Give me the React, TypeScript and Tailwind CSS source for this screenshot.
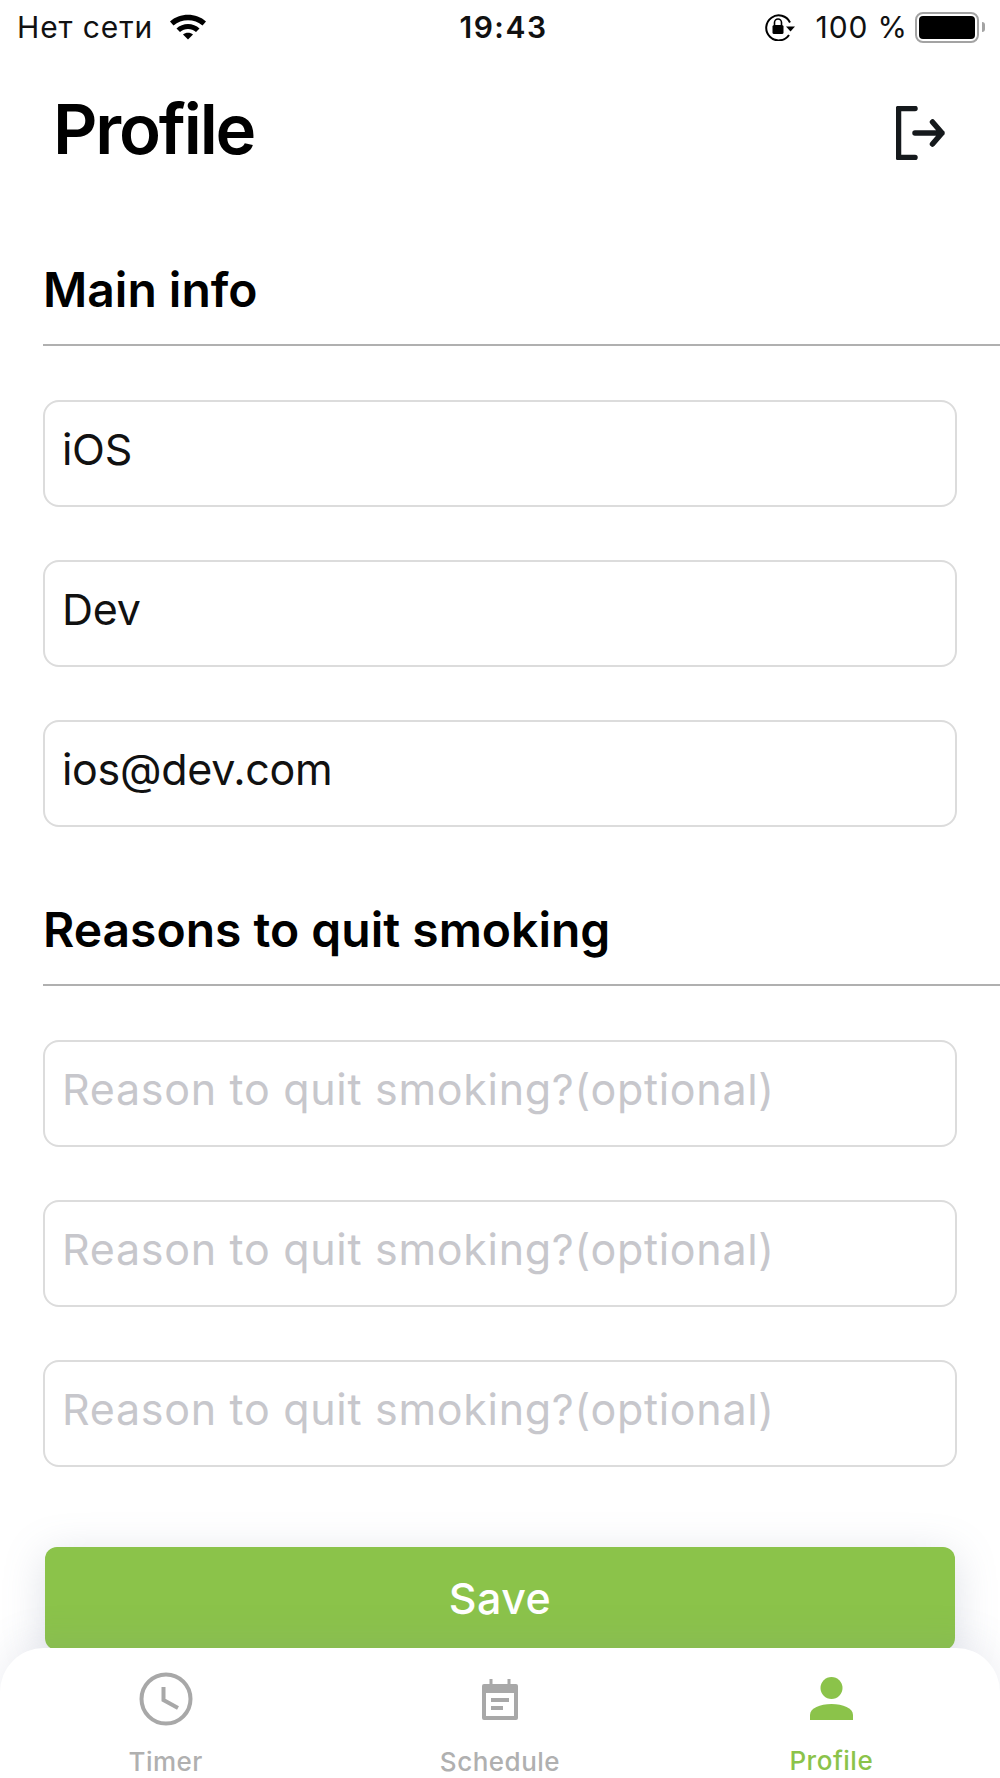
import React from 'react';

const font = 'font-["Inter",sans-serif]';

const fields = ['iOS', 'Dev', 'ios@dev.com'];
const reasons = [1, 2, 3];

const StatusBar = () => (
  <div className='flex h-[54px] items-center justify-between pl-[17px] pr-[15px] font-["Inter",sans-serif] text-[30px] tracking-[0.9px] text-[#111]'>
    <div className="flex w-[300px] items-center gap-[16px]">
      <span>Нет сети</span>
      <svg width="38" height="28" viewBox="0 0 38 28" fill="none" className="mb-[2px]">
        <path d="M1 9.500C10.500 0.500 27.500 0.500 37 9.500L33.500 13.500C25.500 6.500 12.500 6.500 4.500 13.500Z" fill="#000" />
        <path d="M7.500 16.500C13.500 10.500 24.500 10.500 30.500 16.500L27 20C22.500 16 15.500 16 11 20Z" fill="#000" />
        <path d="M14 22.500C16.500 20 21.500 20 24 22.500L19 27.500Z" fill="#000" />
      </svg>
    </div>
    <span className="ml-[5px] font-semibold tracking-[1.5px]">19:43</span>
    <div className="flex w-[300px] items-center justify-end">
      <svg width="32" height="28" viewBox="0 0 32 28" fill="none" className="mr-[20px]">
        <path d="M26 9.500A12.500 12.500 0 1 0 25 22" stroke="#000" strokeWidth="2" />
        <path d="M22 13.500H31L26.500 18.500Z" fill="#000" />
        <rect x="8.500" y="12" width="11" height="9" rx="1.500" fill="#000" />
        <path d="M10.500 12V9.500A3.500 3.500 0 0 1 17.500 9.500V12" stroke="#000" strokeWidth="1.600" />
      </svg>
      <span className="mr-[7px]">100 %</span>
      <div className="flex items-center">
        <div className="flex h-[31px] w-[64px] rounded-[8px] border-2 border-[#a3a3a3] p-[2px]">
          <div className="flex-1 rounded-[4px] bg-black" />
        </div>
        <div className="ml-[3px] h-[10px] w-[3px] rounded-r-full bg-[#a3a3a3]" />
      </div>
    </div>
  </div>
);

const SectionTitle = ({ children }: { children: React.ReactNode }) => (
  <div className="ml-[43px] border-b-2 border-[#b0b0b0] pb-[24px]">
    <h2 className="text-[48px] font-semibold leading-[60px] text-black">{children}</h2>
  </div>
);

const Field = ({ value, placeholder }: { value?: string; placeholder?: string }) => (
  <div className="flex h-[107px] items-center rounded-[16px] border-2 border-[#dcdcdc] bg-white px-[17px] pb-[8px]">
    <span className={`text-[43px] ${value ? 'tracking-[-0.3px] text-[#111]' : 'tracking-[0.7px] text-[#c7c7cc]'}`}>{value || placeholder}</span>
  </div>
);

const TabBar = () => (
  <div className="absolute bottom-0 left-0 right-0 flex h-[130px] rounded-t-[44px] bg-white font-['Inter',sans-serif] text-[26px] font-medium tracking-[0.5px] shadow-[0_-6px_40px_rgba(120,130,160,0.14)]">
    <div className="flex flex-1 flex-col items-center pr-[3px] text-[#b0b0b0]">
      <svg width="54" height="54" viewBox="0 0 54 54" fill="none" className="mt-[24px]">
        <circle cx="27" cy="27" r="24.500" stroke="#a8a8a8" strokeWidth="4" />
        <path d="M24.500 15V28L39 36" stroke="#a8a8a8" strokeWidth="4" />
      </svg>
      <span className="mt-[23px] leading-none">Timer</span>
    </div>
    <div className="flex flex-1 flex-col items-center text-[#b0b0b0]">
      <svg width="36" height="41" viewBox="0 0 36 41" fill="none" className="mt-[31px]">
        <path d="M2 7H34V39H2Z" stroke="#a8a8a8" strokeWidth="4" strokeLinejoin="round" />
        <path d="M2 5H34V14H2Z" fill="#a8a8a8" />
        <path d="M9 0V6M27 0V6" stroke="#a8a8a8" strokeWidth="3" />
        <path d="M9 21H27M9 29H21" stroke="#a8a8a8" strokeWidth="4" />
      </svg>
      <span className="mt-[29px] leading-none">Schedule</span>
    </div>
    <div className="flex flex-1 flex-col items-center pr-[3px] text-[#8bc34a]">
      <svg width="43" height="43" viewBox="0 0 43 43" className="mt-[29px]" fill="#8bc34a">
        <circle cx="21.500" cy="11" r="11" />
        <path d="M0 43V38C0 31 10 27 21.500 27C33 27 43 31 43 38V43Z" />
      </svg>
      <span className="mt-[28px] leading-none">Profile</span>
    </div>
  </div>
);

export default function App() {
  return (
    <div className={`relative h-[1778px] w-[1000px] overflow-hidden bg-white ${font}`}>
      <StatusBar />
      <div className="flex items-center justify-between pl-[53px] pr-[54px] pt-[30px]">
        <h1 className="text-[69px] font-semibold leading-[90px] tracking-[-2.2px] text-black">Profile</h1>
        <svg width="50" height="54" viewBox="0 0 50 54" fill="none" className="mt-[8px]">
          <path d="M19 2.500H2.500V51.500H19" stroke="#15191c" strokeWidth="5.500" strokeLinecap="round" strokeLinejoin="round" />
          <path d="M19 27H46M36.500 16L46 27L36.500 38" stroke="#15191c" strokeWidth="5.500" strokeLinecap="round" strokeLinejoin="round" />
        </svg>
      </div>

      <div className="mt-[86px]">
        <SectionTitle>Main info</SectionTitle>
        <div className="mx-[43px] mt-[54px] flex flex-col gap-[53px]">
          {fields.map((f) => (
            <Field key={f} value={f} />
          ))}
        </div>
      </div>

      <div className="mt-[73px]">
        <SectionTitle>Reasons to quit smoking</SectionTitle>
        <div className="mx-[43px] mt-[54px] flex flex-col gap-[53px]">
          {reasons.map((r) => (
            <Field key={r} placeholder="Reason to quit smoking?(optional)" />
          ))}
        </div>
      </div>

      <button className="mx-[45px] mt-[80px] flex h-[103px] w-[910px] items-center justify-center rounded-[12px] bg-[#8bc34a] text-[43px] font-medium tracking-[0.5px] text-white shadow-[0_8px_40px_rgba(120,130,160,0.25)]">
        Save
      </button>

      <TabBar />
    </div>
  );
}
